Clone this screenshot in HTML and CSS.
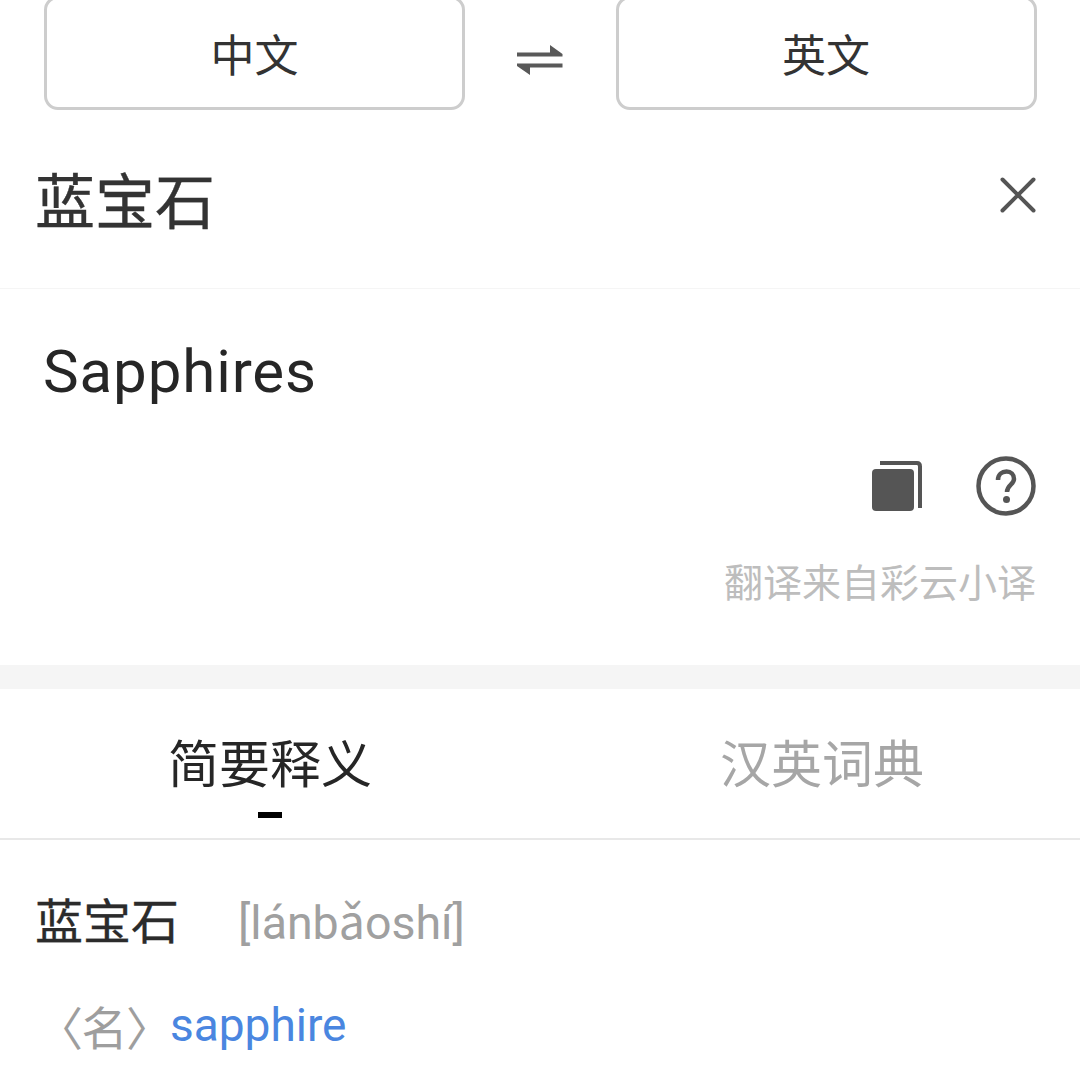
FILE: index.html
```html
<!DOCTYPE html>
<html lang="zh-CN">
<head>
<meta charset="utf-8">
<title>翻译</title>
<link rel="stylesheet" href="styles.css">
</head>
<body>
<div class="page">
  <div class="lang-bar">
    <div class="lang-btn">中文</div>
    <div class="swap">
      <svg width="46" height="32" viewBox="0 0 46 32"><path d="M0 8.500H33V1L45.500 10V12.500H0Z M0 19.500H45.500V23.500H13V31L0 22Z" fill="#595959"/></svg>
    </div>
    <div class="lang-btn">英文</div>
  </div>
  <div class="source">
    <div class="source-text">蓝宝石</div>
    <svg class="close" width="40" height="40" viewBox="0 0 40 40"><path d="M4.500 4.500L35.500 35.500M35.500 4.500L4.500 35.500" stroke="#555" stroke-width="4" stroke-linecap="round" fill="none"/></svg>
  </div>
  <div class="result">
    <div class="result-text">Sapphires</div>
    <div class="actions">
      <svg width="52" height="52" viewBox="0 0 52 52"><rect x="1" y="9" width="42" height="42" rx="4" fill="#555"/><path d="M9 3H46Q49 3 49 6.500V48" stroke="#555" stroke-width="4" fill="none"/></svg>
      <svg width="60" height="60" viewBox="0 0 60 60"><circle cx="30" cy="30" r="27.500" stroke="#555" stroke-width="4.500" fill="none"/><path d="M22 24C22 18.500 26 15.500 30.500 15.500C35 15.500 38 18.500 38 23C38 28.500 31 29 31 36" stroke="#555" stroke-width="4.500" fill="none"/><circle cx="30.500" cy="43.500" r="3.500" fill="#555"/></svg>
    </div>
    <div class="credit">翻译来自彩云小译</div>
  </div>
  <div class="divider"></div>
  <div class="tabs">
    <div class="tab tab-active">简要释义<span class="tab-mark"></span></div>
    <div class="tab tab-second">汉英词典</div>
  </div>
  <div class="entry">
    <div class="entry-head"><span class="word">蓝宝石</span><span class="pinyin">[lánbǎoshí]</span></div>
    <div class="entry-def"><span class="pos">〈名〉</span><span class="def">sapphire</span></div>
  </div>
</div>
</body>
</html>
```
FILE: styles.css
```css
* { box-sizing: border-box; }
html, body { margin: 0; padding: 0; background: #fff; }
body { font-family: Roboto, "Noto Sans CJK SC", sans-serif; }
.page { width: 1080px; height: 1080px; overflow: hidden; display: flex; flex-direction: column; }
.lang-bar { display: flex; flex: none; align-items: center; padding: 0 43.500px 0 44px; margin-top: -4px; height: 114px; }
.lang-btn { flex: none; width: 421px; height: 114px; border: 3px solid #cdcdcd; border-radius: 14px; display: flex; align-items: center; justify-content: center; font-size: 44px; color: #333; }
.swap { flex: 1; display: flex; justify-content: center; padding-top: 14px; }
.source { flex: none; height: 179px; border-bottom: 1px solid #f5f5f5; display: flex; justify-content: space-between; align-items: flex-start; padding: 0 42px 0 35px; }
.source-text { font-size: 60px; line-height: 80px; margin-top: 54px; color: #333; -webkit-text-stroke: 0.4px #333; }
.close { margin-top: 65px; }
.result { flex: none; height: 376px; padding: 0 44px; display: flex; flex-direction: column; }
.result-text { font-size: 60px; line-height: 80px; margin-top: 43px; margin-left: -1px; letter-spacing: 0.9px; color: #262626; }
.actions { display: flex; justify-content: flex-end; align-items: center; gap: 53px; margin-top: 44px; }
.credit { text-align: right; font-size: 39px; line-height: 50px; margin-top: 43px; color: #bdbdbd; }
.divider { flex: none; height: 24px; background: #f5f5f5; }
.tabs { flex: none; height: 151px; border-bottom: 2px solid #e8e8e8; display: flex; }
.tab { position: relative; width: 50%; text-align: center; font-size: 51px; line-height: 70px; padding-top: 42px; color: #a6a6a6; }
.tab-active { color: #262626; }
.tab-second { padding-left: 24px; }
.tab-mark { position: absolute; left: 258px; top: 123px; width: 24px; height: 6px; background: #000; }
.entry { padding: 43px 35px 0; }
.entry-head { display: flex; align-items: center; height: 70px; }
.word { font-size: 48px; color: #2b2b2b; -webkit-text-stroke: 0.3px #2b2b2b; }
.pinyin { font-size: 46.500px; color: #a0a0a0; margin-left: 59px; }
.entry-def { display: flex; align-items: center; height: 70px; margin-top: 37px; }
.pos { flex: none; font-size: 46px; letter-spacing: -1.500px; color: #9e9e9e; margin-left: 2px; width: 133px; white-space: nowrap; }
.def { font-size: 46px; color: #4a86e0; }
```
